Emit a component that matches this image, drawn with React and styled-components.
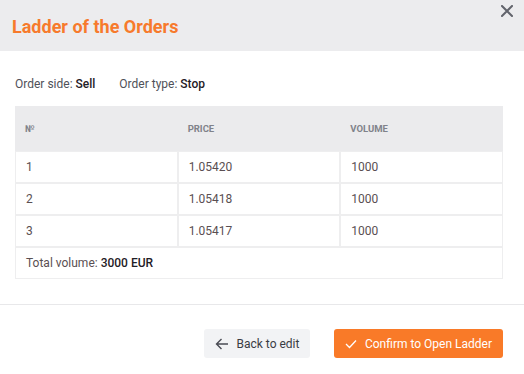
import styled, { createGlobalStyle } from 'styled-components'

const GlobalStyle = createGlobalStyle`
  html, body {
    margin: 0;
    padding: 0;
    background: #ffffff;
    font-family: Roboto, "Liberation Sans", Arial, sans-serif;
  }
`

const rows = [
  { n: 1, price: '1.05420', volume: '1000' },
  { n: 2, price: '1.05418', volume: '1000' },
  { n: 3, price: '1.05417', volume: '1000' },
]

const App = () => {
  return (
    <>
      <GlobalStyle />
      <Modal>
        <Header>
          <Title>Ladder of the Orders</Title>
          <Close aria-label="Close">
            <svg width="12" height="12" viewBox="0 0 12 12">
              <path d="M1 1L11 11M11 1L1 11" stroke="#62646c" strokeWidth="2" strokeLinecap="square" />
            </svg>
          </Close>
        </Header>

        <Body>
          <Info>
            <span>
              Order side: <strong>Sell</strong>
            </span>
            <span>
              Order type: <strong>Stop</strong>
            </span>
          </Info>

          <Table>
            <thead>
              <tr>
                <Th>№</Th>
                <Th>Price</Th>
                <Th>Volume</Th>
              </tr>
            </thead>
            <tbody>
              {rows.map((r) => (
                <tr key={r.n}>
                  <Td>{r.n}</Td>
                  <Td>{r.price}</Td>
                  <Td>{r.volume}</Td>
                </tr>
              ))}
              <tr>
                <Td colSpan={3}>
                  Total volume: <strong>3000 EUR</strong>
                </Td>
              </tr>
            </tbody>
          </Table>
        </Body>

        <Footer>
          <Button>
            <svg width="14" height="12" viewBox="0 0 14 12">
              <path d="M13 6H1.5M6.5 1L1.5 6L6.5 11" fill="none" stroke="#4a4c54" strokeWidth="1.4" />
            </svg>
            Back to edit
          </Button>
          <Button $primary>
            <svg width="12" height="10" viewBox="0 0 12 10">
              <path d="M1 5L4.5 8.5L11 1.5" fill="none" stroke="#ffffff" strokeWidth="1.3" />
            </svg>
            Confirm to Open Ladder
          </Button>
        </Footer>
      </Modal>
    </>
  )
}

export default App

const Modal = styled.div`
  width: 524px;
  height: 374px;
  background: #ffffff;
  display: flex;
  flex-direction: column;
`

const Header = styled.div`
  position: relative;
  height: 51px;
  background: #ececee;
  display: flex;
  align-items: center;
  padding: 0 12px;
  box-sizing: border-box;
`

const Title = styled.div`
  color: #f77a2c;
  font-size: 18px;
  font-weight: 700;
  padding-top: 1px;
`

const Close = styled.div`
  position: absolute;
  top: 5px;
  right: 11px;
  width: 12px;
  height: 12px;
  display: flex;
`

const Body = styled.div`
  padding: 26px 21px 25px 15px;
  border-bottom: 1px solid #e8e8ea;
`

const Info = styled.div`
  display: flex;
  gap: 24px;
  font-size: 12px;
  color: #4f5159;
  line-height: 14px;
  margin-bottom: 15px;

  & strong {
    font-weight: 500;
    color: #1f2026;
  }
`

const Table = styled.table`
  width: 100%;
  border-collapse: separate;
  border-spacing: 0;
  font-size: 12px;
`

const Th = styled.th`
  background: #ebebed;
  height: 45px;
  padding: 0 10px;
  text-align: left;
  font-size: 9.5px;
  font-weight: 700;
  color: #80828a;
  text-transform: uppercase;
  width: 33.33%;
`

const Td = styled.td`
  height: 30px;
  padding: 0 10px;
  border: 1px solid #eeeeef;
  color: #5a4f52;
  font-size: 12px;

  & strong {
    font-weight: 500;
    color: #1f2026;
  }
`

const Footer = styled.div`
  display: flex;
  justify-content: flex-end;
  gap: 24px;
  padding: 24px 21px 0 0;
`

const Button = styled.button`
  height: 29px;
  display: flex;
  align-items: center;
  gap: 8px;
  padding: 0 ${(p) => (p.$primary ? '11px' : '10.5px')};
  border: none;
  border-radius: 3px;
  font-family: Roboto, "Liberation Sans", Arial, sans-serif;
  font-size: 12px;
  background: ${(p) => (p.$primary ? '#f97a28' : '#f2f3f5')};
  color: ${(p) => (p.$primary ? '#ffffff' : '#3a3c44')};
  cursor: pointer;
`
